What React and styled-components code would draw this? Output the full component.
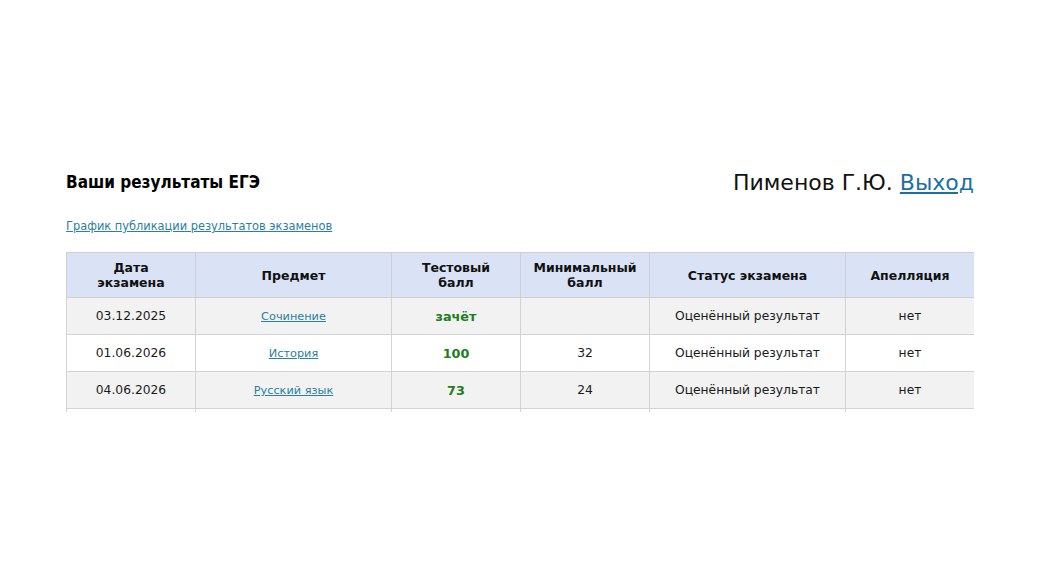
import React from 'react'
import styled, { createGlobalStyle } from 'styled-components';

const GlobalStyle = createGlobalStyle`
  html, body {
    margin: 0;
    padding: 0;
    background: #ffffff;
    font-family: "DejaVu Sans", Verdana, sans-serif;
  }
`

const results = [
  { date: '03.12.2025', subject: 'Сочинение', score: 'зачёт', min: '', status: 'Оценённый результат', appeal: 'нет' },
  { date: '01.06.2026', subject: 'История', score: '100', min: '32', status: 'Оценённый результат', appeal: 'нет' },
  { date: '04.06.2026', subject: 'Русский язык', score: '73', min: '24', status: 'Оценённый результат', appeal: 'нет' },
  { date: '', subject: '', score: '', min: '', status: '', appeal: '' },
]

const Page = styled.div`
  width: 908px;
  margin: 0 auto;
  padding-top: 168px;
`

const Header = styled.div`
  display: flex;
  justify-content: space-between;
  align-items: flex-start;
`

const Title = styled.h1`
  margin: 4px 0 0;
  font-family: "DejaVu Sans Condensed", "DejaVu Sans", sans-serif;
  font-stretch: condensed;
  font-size: 17px;
  font-weight: 700;
  color: #000;
`

const User = styled.div`
  margin-top: 2px;
  font-size: 22px;
  color: #111;
`

const ExitLink = styled.a`
  color: #1b6fa6;
  text-decoration: underline;
  text-underline-offset: 2px;
  cursor: pointer;
`

const ScheduleLink = styled.a`
  display: inline-block;
  margin-top: 24px;
  font-size: 11.4px;
  color: #2a7fa3;
  text-decoration: underline;
  cursor: pointer;
`

const TableClip = styled.div`
  margin-top: 18px;
  height: 160px;
  overflow: hidden;
`

const Table = styled.table`
  width: 100%;
  border-collapse: collapse;
  table-layout: fixed;
  font-size: 12.3px;
`

const Th = styled.th`
  background: #dae2f5;
  border: 1px solid #cfcfcf;
  height: 44px;
  padding: 0 6px;
  font-weight: 700;
  font-size: 12.5px;
  line-height: 15px;
  color: #111;
  text-align: center;
`

const Row = styled.tr`
  background: ${props => props.odd ? '#f2f2f2' : '#ffffff'};
`

const Td = styled.td`
  border: 1px solid #d3d3d3;
  height: 36px;
  padding: 0 6px;
  text-align: center;
  color: #1a1a1a;
  font-weight: ${props => props.score ? 700 : 400};
  ${props => props.score && 'color: #1e7d1e; font-size: 12.8px;'}
`

const SubjectLink = styled.a`
  font-size: 11.3px;
  color: #2a7fa3;
  text-decoration: underline;
  cursor: pointer;
`

const App = () => {
  return (
    <>
      <GlobalStyle />
      <Page>
        <Header>
          <Title>Ваши результаты ЕГЭ</Title>
          <User>Пименов Г.Ю. <ExitLink>Выход</ExitLink></User>
        </Header>
        <ScheduleLink>График публикации результатов экзаменов</ScheduleLink>
        <TableClip>
          <Table>
            <colgroup>
              <col style={{ width: 129 }} />
              <col style={{ width: 196 }} />
              <col style={{ width: 129 }} />
              <col style={{ width: 129 }} />
              <col style={{ width: 196 }} />
              <col style={{ width: 129 }} />
            </colgroup>
            <thead>
              <tr>
                <Th>Дата<br />экзамена</Th>
                <Th>Предмет</Th>
                <Th>Тестовый<br />балл</Th>
                <Th>Минимальный<br />балл</Th>
                <Th>Статус экзамена</Th>
                <Th>Апелляция</Th>
              </tr>
            </thead>
            <tbody>
              {results.map((item, index) => (
                <Row key={index} odd={index % 2 === 0}>
                  <Td>{item.date}</Td>
                  <Td><SubjectLink>{item.subject}</SubjectLink></Td>
                  <Td score>{item.score}</Td>
                  <Td>{item.min}</Td>
                  <Td>{item.status}</Td>
                  <Td>{item.appeal}</Td>
                </Row>
              ))}
            </tbody>
          </Table>
        </TableClip>
      </Page>
    </>
  )
}

export default App;
